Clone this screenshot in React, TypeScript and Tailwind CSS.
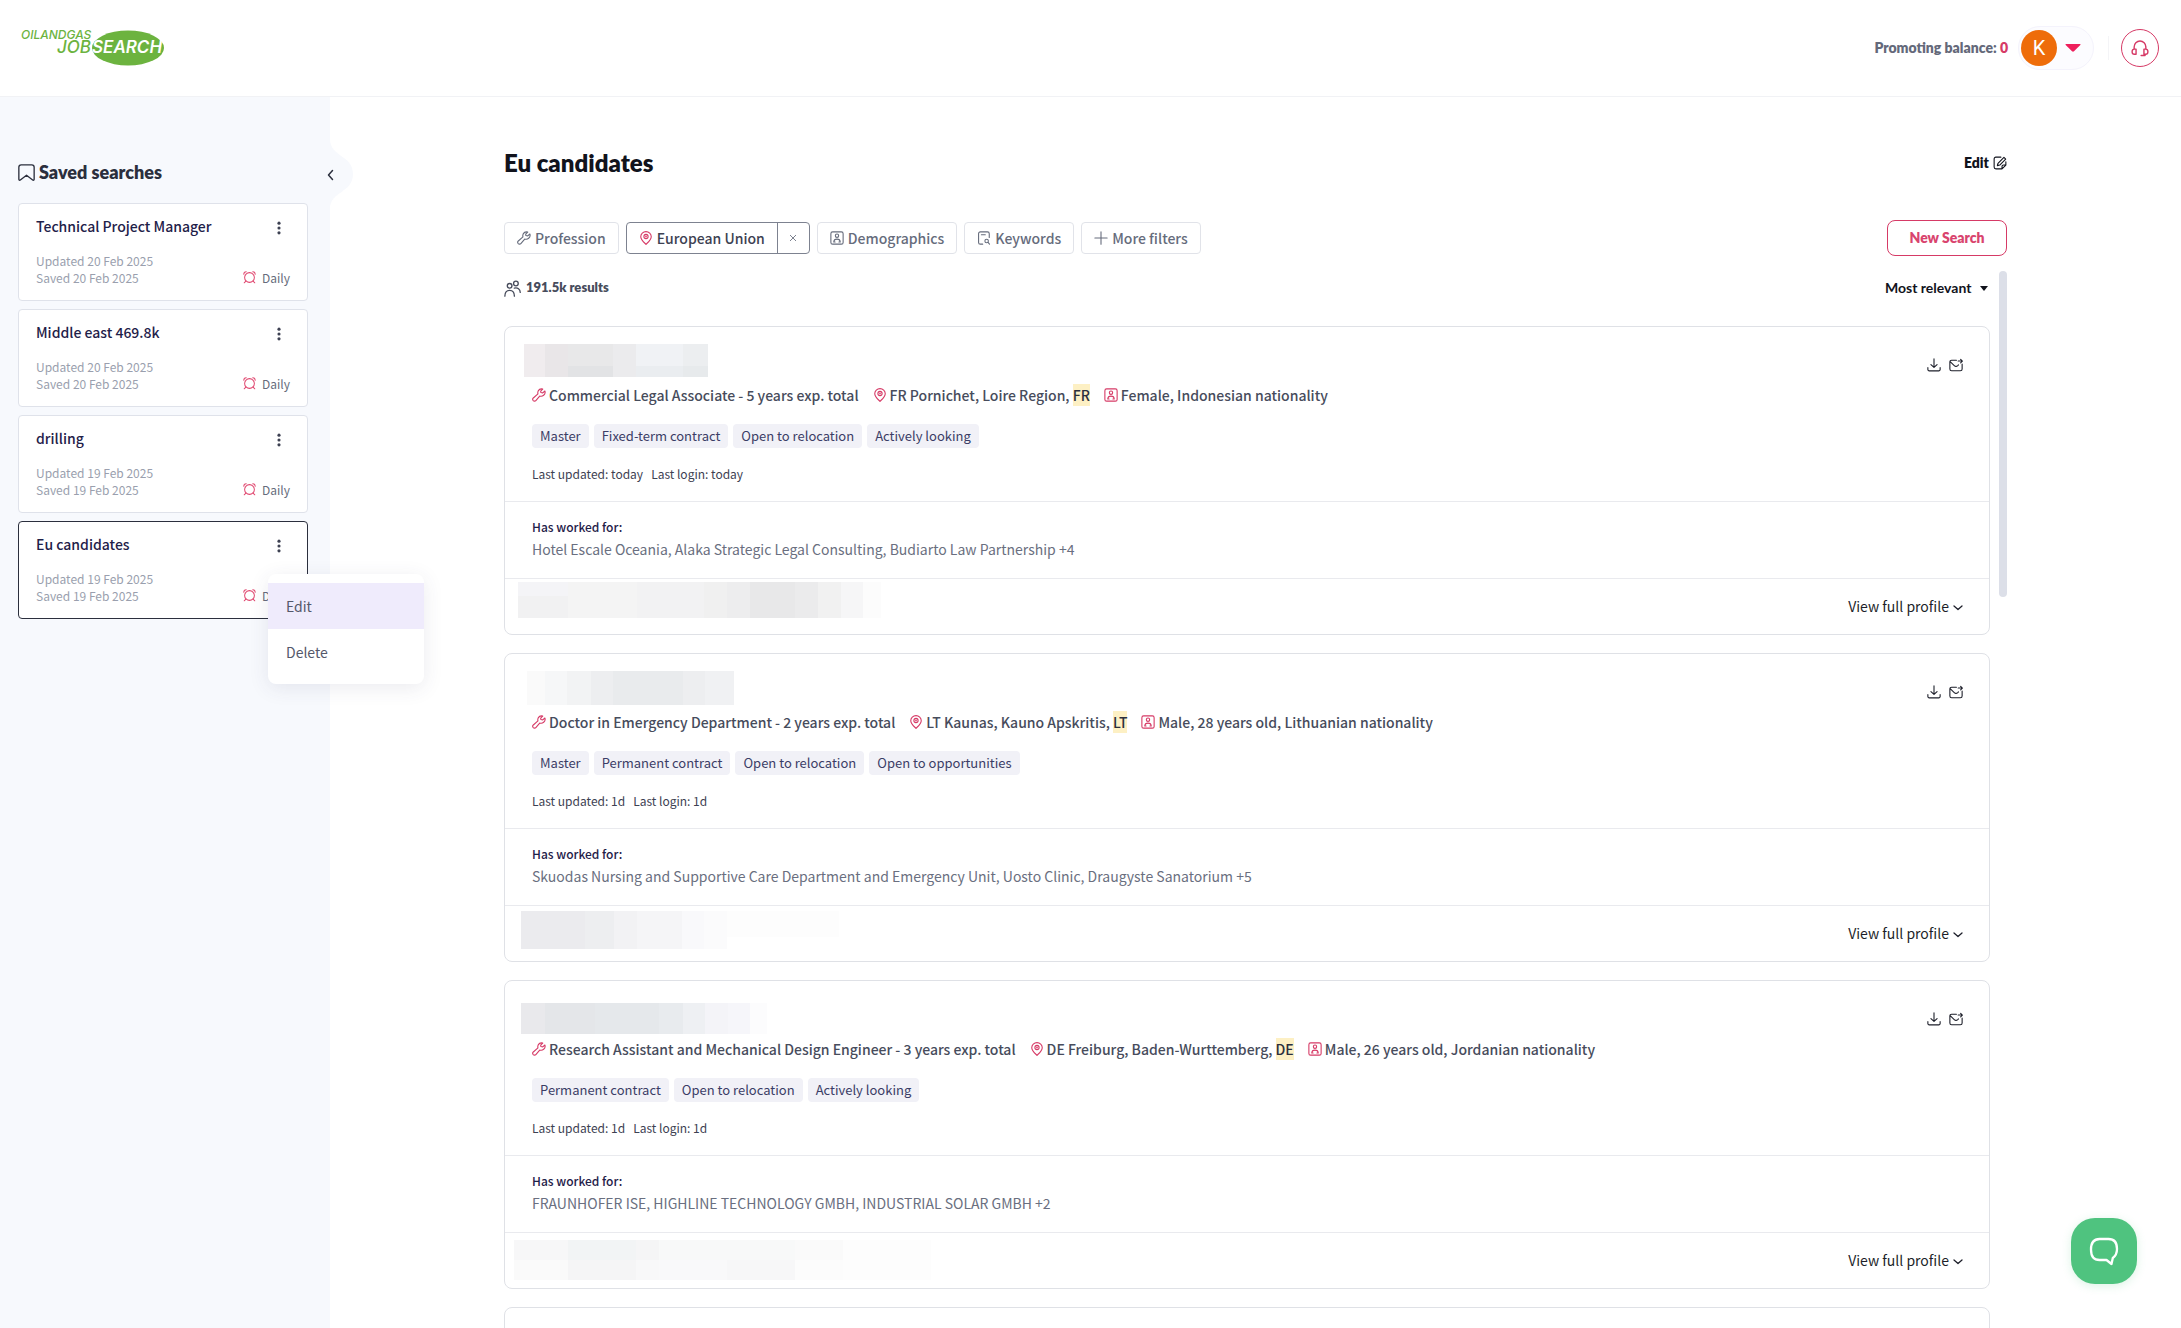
import type { ReactNode } from "react";

type IconProps = { className?: string };
type Cell = [x: number, y: number, w: number, h: number, color: string];

interface SavedSearch {
  id: number;
  name: string;
  updated: string;
  saved: string;
  active?: boolean;
}

interface Candidate {
  id: number;
  job: string;
  place: string;
  country: string;
  person: string;
  tags: string[];
  updated: string;
  login: string;
  companies: string;
  nameCells: Cell[];
  contactCells: Cell[];
}

const savedSearches: SavedSearch[] = [
  { id: 1, name: "Technical Project Manager", updated: "20 Feb 2025", saved: "20 Feb 2025" },
  { id: 2, name: "Middle east 469.8k", updated: "20 Feb 2025", saved: "20 Feb 2025" },
  { id: 3, name: "drilling", updated: "19 Feb 2025", saved: "19 Feb 2025" },
  { id: 4, name: "Eu candidates", updated: "19 Feb 2025", saved: "19 Feb 2025", active: true },
];

const candidates: Candidate[] = [
  {
    id: 1,
    job: "Commercial Legal Associate - 5 years exp. total",
    place: "FR Pornichet, Loire Region,",
    country: "FR",
    person: "Female, Indonesian nationality",
    tags: ["Master", "Fixed-term contract", "Open to relocation", "Actively looking"],
    updated: "today",
    login: "today",
    companies: "Hotel Escale Oceania, Alaka Strategic Legal Consulting, Budiarto Law Partnership +4",
    nameCells: [
      [19, 17, 21, 33, "#f0ecee"],
      [40, 17, 23, 33, "#e9e6e8"],
      [63, 17, 45, 22, "#e8e8e9"],
      [63, 39, 45, 11, "#e2e3e5"],
      [108, 17, 23, 33, "#ebebed"],
      [131, 17, 47, 22, "#f0f2f5"],
      [131, 39, 47, 11, "#eaedf0"],
      [178, 17, 25, 22, "#eceef0"],
      [178, 39, 25, 11, "#e7eaec"],
    ],
    contactCells: [
      [13, 3, 50, 14, "#f4f4f7"],
      [13, 17, 50, 22, "#f1f1f2"],
      [63, 3, 69, 36, "#f4f4f4"],
      [132, 3, 67, 36, "#f2f2f3"],
      [199, 3, 23, 36, "#f0f0f0"],
      [222, 3, 23, 36, "#ededee"],
      [245, 3, 45, 36, "#e8e8e9"],
      [290, 3, 23, 36, "#ebebec"],
      [313, 3, 23, 36, "#f1f1f1"],
      [336, 3, 22, 36, "#f6f6f7"],
      [358, 3, 18, 36, "#fcfcfc"],
    ],
  },
  {
    id: 2,
    job: "Doctor in Emergency Department - 2 years exp. total",
    place: "LT Kaunas, Kauno Apskritis,",
    country: "LT",
    person: "Male, 28 years old, Lithuanian nationality",
    tags: ["Master", "Permanent contract", "Open to relocation", "Open to opportunities"],
    updated: "1d",
    login: "1d",
    companies: "Skuodas Nursing and Supportive Care Department and Emergency Unit, Uosto Clinic, Draugyste Sanatorium +5",
    nameCells: [
      [22, 17, 18, 34, "#fafafa"],
      [40, 17, 22, 34, "#f6f7f8"],
      [62, 17, 24, 34, "#f2f3f4"],
      [86, 17, 22, 34, "#edeef0"],
      [108, 17, 70, 34, "#e9ebed"],
      [178, 17, 22, 34, "#edeef0"],
      [200, 17, 29, 34, "#f0f1f3"],
    ],
    contactCells: [
      [16, 5, 64, 38, "#ebebee"],
      [80, 5, 29, 38, "#edeef0"],
      [109, 5, 23, 38, "#f2f2f4"],
      [132, 5, 45, 38, "#f5f5f7"],
      [177, 5, 22, 38, "#f9f9fb"],
      [199, 5, 23, 38, "#fbfbfc"],
      [222, 5, 112, 26, "#fdfdfd"],
    ],
  },
  {
    id: 3,
    job: "Research Assistant and Mechanical Design Engineer - 3 years exp. total",
    place: "DE Freiburg, Baden-Wurttemberg,",
    country: "DE",
    person: "Male, 26 years old, Jordanian nationality",
    tags: ["Permanent contract", "Open to relocation", "Actively looking"],
    updated: "1d",
    login: "1d",
    companies: "FRAUNHOFER ISE, HIGHLINE TECHNOLOGY GMBH, INDUSTRIAL SOLAR GMBH +2",
    nameCells: [
      [16, 22, 24, 31, "#e9e9ec"],
      [40, 22, 50, 31, "#e4e6e9"],
      [90, 22, 64, 31, "#e5e8eb"],
      [154, 22, 24, 31, "#e8ebee"],
      [178, 22, 22, 31, "#eef0f3"],
      [200, 22, 23, 31, "#f4f4f8"],
      [223, 22, 22, 31, "#f6f6fa"],
      [245, 22, 17, 31, "#fcfcfd"],
    ],
    contactCells: [
      [9, 7, 54, 20, "#f7f7f8"],
      [9, 27, 54, 20, "#fafafa"],
      [63, 7, 68, 20, "#f2f4f5"],
      [63, 27, 68, 20, "#f5f5f6"],
      [131, 7, 23, 20, "#f5f5f6"],
      [131, 27, 23, 20, "#f8f8f9"],
      [154, 7, 136, 20, "#f8f9f9"],
      [154, 27, 68, 20, "#f9f9fa"],
      [222, 27, 68, 20, "#f7f7f8"],
      [290, 7, 48, 20, "#fafafa"],
      [290, 27, 48, 20, "#fcfcfc"],
      [338, 7, 88, 40, "#fdfdfd"],
    ],
  },
];

function Icon({ className = "size-4", children }: IconProps & { children: ReactNode }) {
  return (
    <svg
      viewBox="0 0 16 16"
      className={`${className} shrink-0`}
      fill="none"
      stroke="currentColor"
      strokeWidth="1.25"
      strokeLinecap="round"
      strokeLinejoin="round"
      aria-hidden="true"
    >
      {children}
    </svg>
  );
}

const WrenchIcon = ({ className }: IconProps) => (
  <Icon className={className}>
    <path d="M12.300 1.200C10.300 0.700 8.100 1.500 7.100 3.300C6.500 4.500 6.500 5.700 6.800 6.800L1.500 11.400C0.600 12.300 0.600 13.500 1.400 14.400C2.300 15.300 3.600 15.200 4.400 14.300L8.800 9.200C10.300 9.700 12 9.400 13.300 8.300C14.900 7 15.300 5.100 14.700 3.400L12.300 5.600L10.200 5.200L9.900 3.500Z" />
  </Icon>
);

const PinIcon = ({ className }: IconProps) => (
  <Icon className={className}>
    <path d="M8 15.200C6.300 13.500 2 10.200 2 6.500A6 5.800 0 0 1 14 6.500C14 10.200 9.700 13.500 8 15.200Z" />
    <circle cx="8" cy="6.300" r="2.400" />
    <circle cx="8" cy="6.300" r="0.400" />
  </Icon>
);

const PersonCardIcon = ({ className }: IconProps) => (
  <Icon className={className}>
    <rect x="1" y="1" width="14" height="14" rx="2" />
    <circle cx="8" cy="5.400" r="1.900" />
    <path d="M4.300 12.600C4.400 10.400 5.800 9.300 8 9.300S11.600 10.400 11.700 12.600H10.200M4.300 12.600H5.800" />
  </Icon>
);

const KeywordIcon = ({ className }: IconProps) => (
  <Icon className={className}>
    <path d="M6.500 15H3.800A2 2 0 0 1 1.800 13V3A2 2 0 0 1 3.800 1H12A2 2 0 0 1 14 3V7.500M5 4.300H9.500" />
    <circle cx="11" cy="11.500" r="2" />
    <path d="M12.600 13.100L14.300 15" />
  </Icon>
);

const PlusIcon = ({ className }: IconProps) => (
  <Icon className={className}>
    <path d="M8 1V15M1 8H15" />
  </Icon>
);

const PeopleIcon = ({ className }: IconProps) => (
  <Icon className={className}>
    <circle cx="5.300" cy="5.500" r="2.200" />
    <circle cx="11.200" cy="3.300" r="2.200" />
    <path d="M0.800 15.200C0.800 11.900 2.400 9.700 5.300 9.700S9.800 11.900 9.800 15.200M9.700 7.600C12.900 6.800 15.200 8.600 15.300 11.700" />
  </Icon>
);

const BookmarkIcon = ({ className }: IconProps) => (
  <Icon className={className}>
    <path d="M0.800 3A2.200 2.200 0 0 1 3 0.800H13A2.200 2.200 0 0 1 15.200 3V14.400C15.200 15.200 14.400 15.500 13.800 15L8 10.500L2.200 15C1.600 15.500 0.800 15.200 0.800 14.400Z" />
  </Icon>
);

const EditIcon = ({ className }: IconProps) => (
  <Icon className={className}>
    <path d="M9 1.300H3.300A2 2 0 0 0 1.300 3.300V12.700A2 2 0 0 0 3.300 14.700H10.300L14.700 10.300V6.500M10.300 14.700V12A1.700 1.700 0 0 1 12 10.300H14.700" />
    <path d="M5 11L5.700 8.300L12.500 1.500L14.500 3.500L7.700 10.300Z" />
  </Icon>
);

const DownloadIcon = ({ className }: IconProps) => (
  <Icon className={className}>
    <path d="M8 1V10.500M4.500 7.500L8 10.800L11.500 7.500M1 11V13.200A1.500 1.500 0 0 0 2.500 14.700H13.500A1.500 1.500 0 0 0 15 13.200V11" />
  </Icon>
);

const MailIcon = ({ className }: IconProps) => (
  <Icon className={className}>
    <path d="M8.500 2.500H3A2 2 0 0 0 1 4.500V12.500A2 2 0 0 0 3 14.500H13A2 2 0 0 0 15 12.500V7M1.600 4.500L6 8.700C7.200 9.800 8.800 9.800 10 8.700L10.800 7.900M10.500 3.500H15.200M13.300 1.500L15.300 3.500L13.300 5.500" />
  </Icon>
);

const AlarmIcon = ({ className }: IconProps) => (
  <Icon className={className}>
    <circle cx="8" cy="8" r="6" />
    <path d="M1 4C1 2 2 1 4 1M12 1C14 1 15 2 15 4M3.500 12.500L1.500 14.500M12.500 12.500L14.500 14.500" />
  </Icon>
);

const HeadsetIcon = ({ className }: IconProps) => (
  <Icon className={className}>
    <path d="M2.800 9V7A5.200 5.200 0 0 1 13.200 7V9M4.500 9V13.500H3A2 2 0 0 1 1 11.500V11A2 2 0 0 1 3 9ZM11.500 9V13.500H13A2 2 0 0 0 15 11.500V11A2 2 0 0 0 13 9ZM12.500 13.500V14.700H9" />
  </Icon>
);

const DotsIcon = ({ className }: IconProps) => (
  <svg viewBox="0 0 16 16" className={className} fill="currentColor" aria-hidden="true">
    <circle cx="8" cy="2.500" r="1.800" />
    <circle cx="8" cy="8" r="1.800" />
    <circle cx="8" cy="13.500" r="1.800" />
  </svg>
);

function Logo() {
  return (
    <svg viewBox="0 0 148 40" className="h-10 w-37 overflow-visible" role="img" aria-label="OilAndGas JobSearch">
      <ellipse cx="108" cy="20" rx="36" ry="17.500" fill="#6cb33f" />
      <g fontFamily="Inter, sans-serif" fontStyle="italic">
        <text x="1" y="11" fontSize="12" fontWeight="500" fill="#6cb33f">OILANDGAS</text>
        <text x="37" y="25" fontSize="17" fontWeight="500" fill="#6cb33f">JOB</text>
        <text x="72" y="25" fontSize="17" fontWeight="600" fill="#fff">SEARCH</text>
      </g>
    </svg>
  );
}

// pixelated cover over private data
function Mosaic({ cells, className }: { cells: Cell[]; className: string }) {
  return (
    <svg className={`${className} w-[430px]`} shapeRendering="crispEdges" aria-hidden="true">
      {cells.map(([x, y, w, h, color]) => (
        <rect key={`${x}-${y}`} x={x} y={y} width={w} height={h} fill={color} />
      ))}
    </svg>
  );
}

function Header() {
  return (
    <header className="flex h-[97px] shrink-0 items-center justify-between border-b border-[#f1f2f5] pl-5 pr-[22px]">
      <a href="#">
        <Logo />
      </a>
      <div className="flex items-center">
        <p className="font-[Lato,sans-serif] text-sm font-extrabold text-[#64697a]">
          Promoting balance: <span className="text-[#d63a66]">0</span>
        </p>
        <button
          type="button"
          aria-label="Account"
          className="ml-2.5 flex h-11 w-[76px] items-center gap-2 rounded-full border border-[#f4f3fc] bg-[#fcfcff] pl-0.5"
        >
          <span className="flex size-9 items-center justify-center rounded-full bg-[#ee6c0a] font-[Roboto,sans-serif] text-xl text-white">
            K
          </span>
          <svg viewBox="0 0 16 8" className="h-2 w-4" fill="#ee1f5c" aria-hidden="true">
            <path d="M1 0H15Q16 0 15.300 1L9 7.300Q8 8 7 7.300L0.700 1Q0 0 1 0Z" />
          </svg>
        </button>
        <span className="ml-3.5 h-6 w-px bg-[#f4f4f7]" />
        <button
          type="button"
          aria-label="Support"
          className="ml-3 flex size-[38px] items-center justify-center rounded-full border border-[#d63a66] text-[#d63a66]"
        >
          <HeadsetIcon className="size-[18px]" />
        </button>
      </div>
    </header>
  );
}

function SavedSearchCard({ search }: { search: SavedSearch }) {
  return (
    <li
      className={`relative h-[98px] rounded border bg-white px-[17px] pt-3 ${
        search.active ? "border-[#2b2f3d]" : "border-[#dfe2ea]"
      }`}
    >
      <div className="flex h-5 items-center justify-between">
        <h3 className="text-sm leading-5 font-medium text-[#1f2149]">{search.name}</h3>
        <button type="button" aria-label={`Options for ${search.name}`} className="mt-1 mr-1 text-[#3d4152]">
          <DotsIcon className="size-3.5" />
        </button>
      </div>
      <div className="mt-4 flex items-end justify-between text-xs leading-[17px] text-[#9a9fae]">
        <div>
          <p>Updated {search.updated}</p>
          <p>Saved {search.saved}</p>
        </div>
        <p className="flex items-center gap-1.5 text-[#666c7c]">
          <AlarmIcon className="size-[13px] text-[#e0476f]" />
          Daily
        </p>
      </div>

      {search.active && (
        <div className="absolute top-[52px] left-[249px] z-10 w-[156px] rounded-lg bg-white py-[9px] text-sm text-[#54586a] shadow-[0_4px_20px_rgba(60,60,100,0.1)]">
          <button type="button" className="block h-[46px] w-full bg-[#efebfc] px-[18px] text-left">
            Edit
          </button>
          <button type="button" className="block h-[46px] w-full px-[18px] text-left">
            Delete
          </button>
        </div>
      )}
    </li>
  );
}

function Sidebar() {
  return (
    <aside className="relative w-[330px] shrink-0 bg-[#f7f9fd] pt-[63px] pr-[22px] pl-[18px]">
      <h2 className="flex items-center gap-1 font-[Lato,sans-serif] text-lg leading-6 font-extrabold text-[#2b2f3d]">
        <BookmarkIcon className="size-[17px]" />
        Saved searches
      </h2>
      <ul className="mt-[19px] flex flex-col gap-2">
        {savedSearches.map((s) => (
          <SavedSearchCard key={s.id} search={s} />
        ))}
      </ul>
      <button type="button" aria-label="Collapse sidebar" className="absolute top-[42px] left-[324px] h-[70px] w-[30px]">
        <svg viewBox="0 0 30 70" className="h-[70px] w-[30px]" fill="none">
          <path d="M6 0C6 18 29 16 29 35S6 52 6 70Z" fill="#f7f9fd" />
          <path d="M8.500 31.500L4.500 36L8.500 40.500" stroke="#2b2f3d" strokeWidth="1.500" strokeLinecap="round" strokeLinejoin="round" />
        </svg>
      </button>
    </aside>
  );
}

function FilterButton({ icon, label }: { icon: ReactNode; label: string }) {
  return (
    <button
      type="button"
      className="flex h-8 items-center gap-1 rounded border border-[#e1e3e9] px-3 text-sm font-medium text-[#666c7c]"
    >
      {icon}
      {label}
    </button>
  );
}

function FilterBar() {
  return (
    <div className="mt-[41px] flex items-center justify-between">
      <div className="flex gap-[7px]">
        <FilterButton icon={<WrenchIcon className="size-3.5" />} label="Profession" />
        <div className="flex h-8 rounded border border-[#7d8290]">
          <button type="button" className="flex items-center gap-1 px-3 text-sm font-medium text-[#3d4152]">
            <PinIcon className="size-3.5 text-[#d63a66]" />
            European Union
          </button>
          <button
            type="button"
            aria-label="Remove European Union"
            className="flex w-8 items-center justify-center border-l border-[#7d8290] text-[#7d8290]"
          >
            <svg viewBox="0 0 8 8" className="size-2" stroke="currentColor" aria-hidden="true">
              <path d="M1 1L7 7M7 1L1 7" />
            </svg>
          </button>
        </div>
        <FilterButton icon={<PersonCardIcon className="size-3.5" />} label="Demographics" />
        <FilterButton icon={<KeywordIcon className="size-3.5" />} label="Keywords" />
        <FilterButton icon={<PlusIcon className="size-3.5" />} label="More filters" />
      </div>
      <button
        type="button"
        className="h-9 w-[120px] rounded-lg border border-[#d63a66] font-[Lato,sans-serif] text-sm font-extrabold text-[#d9446e]"
      >
        New Search
      </button>
    </div>
  );
}

function CandidateCard({ candidate: c }: { candidate: Candidate }) {
  return (
    <article className="rounded-lg border border-[#dfe1e6] text-sm">
      <div className="flex h-[52px] justify-between pr-[26px]">
        <Mosaic cells={c.nameCells} className="h-[54px]" />
        <div className="mt-[31px] flex h-3.5 gap-2 text-[#1d1f2a]">
          <button type="button" aria-label="Download profile">
            <DownloadIcon className="size-3.5" />
          </button>
          <button type="button" aria-label="Send message">
            <MailIcon className="size-3.5" />
          </button>
        </div>
      </div>

      <div className="border-b border-[#e9eaee] px-[27px] pt-1 pb-[17px]">
        <div className="flex gap-3.5 leading-6 font-medium text-[#474c5c]">
          <p className="flex items-center gap-[3px]">
            <WrenchIcon className="size-3.5 text-[#d63a66]" />
            {c.job}
          </p>
          <p className="flex items-center gap-[3px]">
            <PinIcon className="size-3.5 text-[#d63a66]" />
            <span>
              {c.place} <mark className="bg-[#fdf0c4] py-px text-[#2b2f3d]">{c.country}</mark>
            </span>
          </p>
          <p className="flex items-center gap-[3px]">
            <PersonCardIcon className="size-3.5 text-[#d63a66]" />
            {c.person}
          </p>
        </div>
        <ul className="mt-[17px] flex gap-[5px] text-[13px] text-[#3b3d66]">
          {c.tags.map((tag) => (
            <li key={tag} className="h-6 rounded bg-[#f1f1f7] px-2 leading-6">
              {tag}
            </li>
          ))}
        </ul>
        <p className="mt-4 flex gap-2 text-xs leading-5 text-[#3d4152]">
          <span>Last updated: {c.updated}</span>
          <span>Last login: {c.login}</span>
        </p>
      </div>

      <div className="border-b border-[#e9eaee] px-[27px] pt-[15px] pb-[17px]">
        <h3 className="text-xs leading-5 font-medium text-[#1f2149]">Has worked for:</h3>
        <p className="leading-6 text-[#6a6f80]">{c.companies}</p>
      </div>

      <div className="flex h-[55px] items-start justify-between pr-[26px]">
        <Mosaic cells={c.contactCells} className="h-[55px]" />
        <button type="button" className="flex h-[53px] items-center gap-1 text-sm text-[#1d1f2a]">
          View full profile
          <svg viewBox="0 0 10 6" className="mt-1 h-1.5 w-2.5" fill="none" stroke="currentColor" aria-hidden="true">
            <path d="M1 1L5 4.500L9 1" strokeWidth="1.300" strokeLinecap="round" strokeLinejoin="round" />
          </svg>
        </button>
      </div>
    </article>
  );
}

function Results() {
  return (
    <div className="mt-[15px] flex min-h-0 flex-1 gap-[9px]">
      <section className="min-w-0 flex-1 overflow-hidden">
        <div className="mb-[21px] flex h-[34px] items-center justify-between">
          <p className="flex items-center gap-[5px] font-[Lato,sans-serif] text-[13px] font-extrabold text-[#474c5c]">
            <PeopleIcon className="size-[17px]" />
            191.5k results
          </p>
          <div className="flex items-center gap-2 pr-0.5">
            <select
              aria-label="Sort by"
              className="appearance-none bg-transparent font-[Lato,sans-serif] text-sm font-bold text-[#11131c]"
            >
              <option>Most relevant</option>
            </select>
            <svg viewBox="0 0 8 5" className="h-[5px] w-2" fill="#11131c" aria-hidden="true">
              <path d="M0 0H8L4 5Z" />
            </svg>
          </div>
        </div>
        <div className="flex flex-col gap-[18px]">
          {candidates.map((c) => (
            <CandidateCard key={c.id} candidate={c} />
          ))}
          <article className="h-40 rounded-lg border border-[#dfe1e6]" />
        </div>
      </section>
      <div className="w-2 shrink-0">
        <div className="h-[326px] rounded-full bg-[#dcdfe8]" />
      </div>
    </div>
  );
}

export default function App() {
  return (
    <div className="flex h-screen flex-col overflow-hidden bg-white font-['Noto_Sans_CJK_SC',sans-serif]">
      <Header />
      <div className="flex min-h-0 flex-1">
        <Sidebar />
        <main className="flex min-w-0 flex-1 flex-col px-[174px] pt-[50px]">
          <div className="flex h-8 shrink-0 items-center justify-between font-[Lato,sans-serif] font-extrabold text-[#11131c]">
            <h1 className="text-2xl">Eu candidates</h1>
            <button type="button" className="flex items-center gap-1 text-sm">
              Edit
              <EditIcon className="size-3.5" />
            </button>
          </div>
          <FilterBar />
          <Results />
        </main>
      </div>
      <button
        type="button"
        aria-label="Open chat"
        className="fixed right-11 bottom-11 flex size-[66px] items-center justify-center rounded-3xl bg-[#4fc37f] shadow-[0_2px_10px_rgba(79,195,127,0.2)]"
      >
        <svg viewBox="0 0 30 30" className="size-[30px]" fill="none" stroke="#fff" strokeWidth="2.300" strokeLinejoin="round" aria-hidden="true">
          <path d="M10.500 3H19.500C25.500 3 28 7 28 13C28 17 26.500 20 23.800 22L22.500 28L17.500 24H10.500C4.500 24 2 19.500 2 13.500S4.500 3 10.500 3Z" />
        </svg>
      </button>
    </div>
  );
}
